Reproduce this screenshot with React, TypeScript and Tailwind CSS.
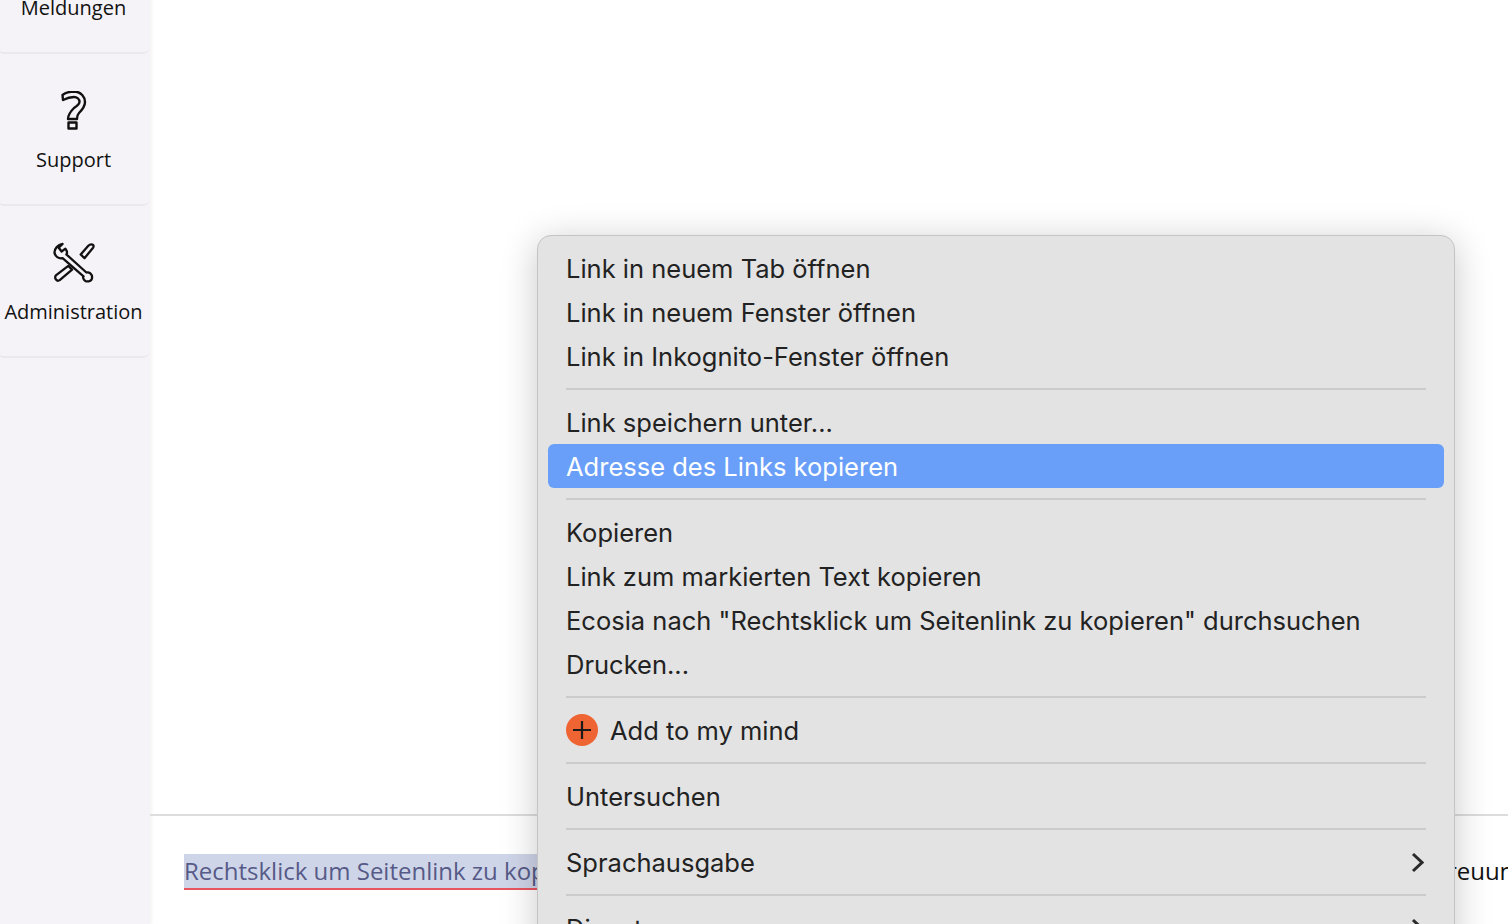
const menuFont = { fontFamily: 'Inter, sans-serif' };

function QuestionIcon() {
  return (
    <svg width="26" height="39" viewBox="-1 0 26 39" fill="none" stroke="#111" strokeWidth="2.4" strokeLinejoin="round">
      <path d="M0.5 4 C4 1 8 0.5 13 0.5 C19 1 23 6 23 11 C23 16 20 19 17 22 C15 24 15 26 15 28 L6 28 C6 23 9 20 12 17 C15 15 17.5 13 17.5 11 C17.5 8 15 6 12 6 C8 6 5 7 1 9 Z" />
      <rect x="6.5" y="31.5" width="8" height="6" />
    </svg>
  );
}

function ToolsIcon() {
  return (
    <svg width="42" height="41" viewBox="-1 -1 44 43" fill="none" stroke="#111" strokeWidth="2.4" strokeLinejoin="round" strokeLinecap="round">
      <path d="M9 1 L5 5 L8 9 L12 6 C14 9 14 11 13 12 L34 31 C37 30 40 33 40 36 C40 40 36 41 33 40 C31 39 30 36 31 35 L9 16 C5 17 1 14 0.5 10 C0.5 6 4 2 9 1 Z" />
      <path d="M28 12 L36 3 C39 0 43 2 41 5 L32 16 Z" />
      <path d="M15 24 L2 34 C0 37 3 41 6 39 L19 28 Z" />
    </svg>
  );
}

function Chevron() {
  return (
    <svg width="13" height="21" viewBox="0 0 13 21" fill="none" stroke="#2a2a2a" strokeWidth="3" className="mr-[2px] -mt-[2px]">
      <path d="M2 2 L11 10.5 L2 19" />
    </svg>
  );
}

function NavCard({ label, icon }: { label: string; icon: React.ReactNode }) {
  return (
    <div className="h-[152px] shrink-0 flex flex-col items-center border-b-2 border-[#e9e8ec] rounded-b-md pt-[35px]">
      <div className="h-[42px] flex items-center justify-center">{icon}</div>
      <span className="mt-[15px] text-[20px] leading-[28px] text-[#111]">{label}</span>
    </div>
  );
}

function Row({ children, active }: { children: React.ReactNode; active?: boolean }) {
  return (
    <div className={`h-[44px] shrink-0 flex items-center px-[18px] pt-[2px] rounded-[6px] text-[25.5px] ${active ? 'bg-[#699ff9] text-white' : 'text-[#222]'}`}>
      {children}
    </div>
  );
}

function Sep() {
  return (
    <div className="h-[22px] shrink-0 flex items-center px-[18px]">
      <div className="h-[2px] w-full bg-[#cbcbcb]" />
    </div>
  );
}

export default function App() {
  return (
    <div className="relative h-[924px] w-[1508px] overflow-hidden flex bg-white" style={{ fontFamily: '"Open Sans", sans-serif' }}>
      <aside className="w-[152px] shrink-0 -ml-[2px] -mt-[98px] pr-[1px] bg-[#f5f3f7] flex flex-col shadow-[1px_0_4px_rgba(0,0,0,0.07)]">
        <NavCard label="Meldungen" icon={<div />} />
        <NavCard label="Support" icon={<QuestionIcon />} />
        <NavCard label="Administration" icon={<ToolsIcon />} />
      </aside>

      <main className="flex-1 flex flex-col min-w-0">
        <div className="h-[814px] shrink-0" />
        <div className="h-[2px] shrink-0 bg-[#dddddd]" />
        <div className="pl-[34px] pt-[38px] flex items-start">
          <span className="bg-[#cfd5e8] border-b-2 border-[#e8555f] text-[#565a87] text-[24px] leading-[34px] whitespace-nowrap">
            Rechtsklick um Seitenlink zu kopieren
          </span>
          <span className="ml-[806px] text-[#111] text-[24px] leading-[34px] whitespace-nowrap">Betreuung</span>
        </div>
      </main>

      <div
        className="absolute left-[537px] top-[235px] w-[918px] h-[760px] bg-[#e3e3e3] border border-[#c4c4c4] rounded-[14px] px-[10px] py-[10px] flex flex-col shadow-[0_6px_36px_rgba(0,0,0,0.22)]"
        style={menuFont}
      >
        <Row>Link in neuem Tab öffnen</Row>
        <Row>Link in neuem Fenster öffnen</Row>
        <Row>Link in Inkognito-Fenster öffnen</Row>
        <Sep />
        <Row>Link speichern unter...</Row>
        <Row active>Adresse des Links kopieren</Row>
        <Sep />
        <Row>Kopieren</Row>
        <Row>Link zum markierten Text kopieren</Row>
        <Row>Ecosia nach "Rechtsklick um Seitenlink zu kopieren" durchsuchen</Row>
        <Row>Drucken...</Row>
        <Sep />
        <Row>
          <span className="w-[32px] h-[32px] -mt-[2px] rounded-full bg-[#ef6433] flex items-center justify-center mr-[12px]">
            <svg width="20" height="20" viewBox="0 0 20 20" stroke="#1a1a1a" strokeWidth="2.2">
              <path d="M1 10 H19 M10 1 V19" />
            </svg>
          </span>
          Add to my mind
        </Row>
        <Sep />
        <Row>Untersuchen</Row>
        <Sep />
        <Row>
          <span className="flex-1">Sprachausgabe</span>
          <Chevron />
        </Row>
        <Sep />
        <Row>
          <span className="flex-1">Dienste</span>
          <Chevron />
        </Row>
      </div>
    </div>
  );
}
